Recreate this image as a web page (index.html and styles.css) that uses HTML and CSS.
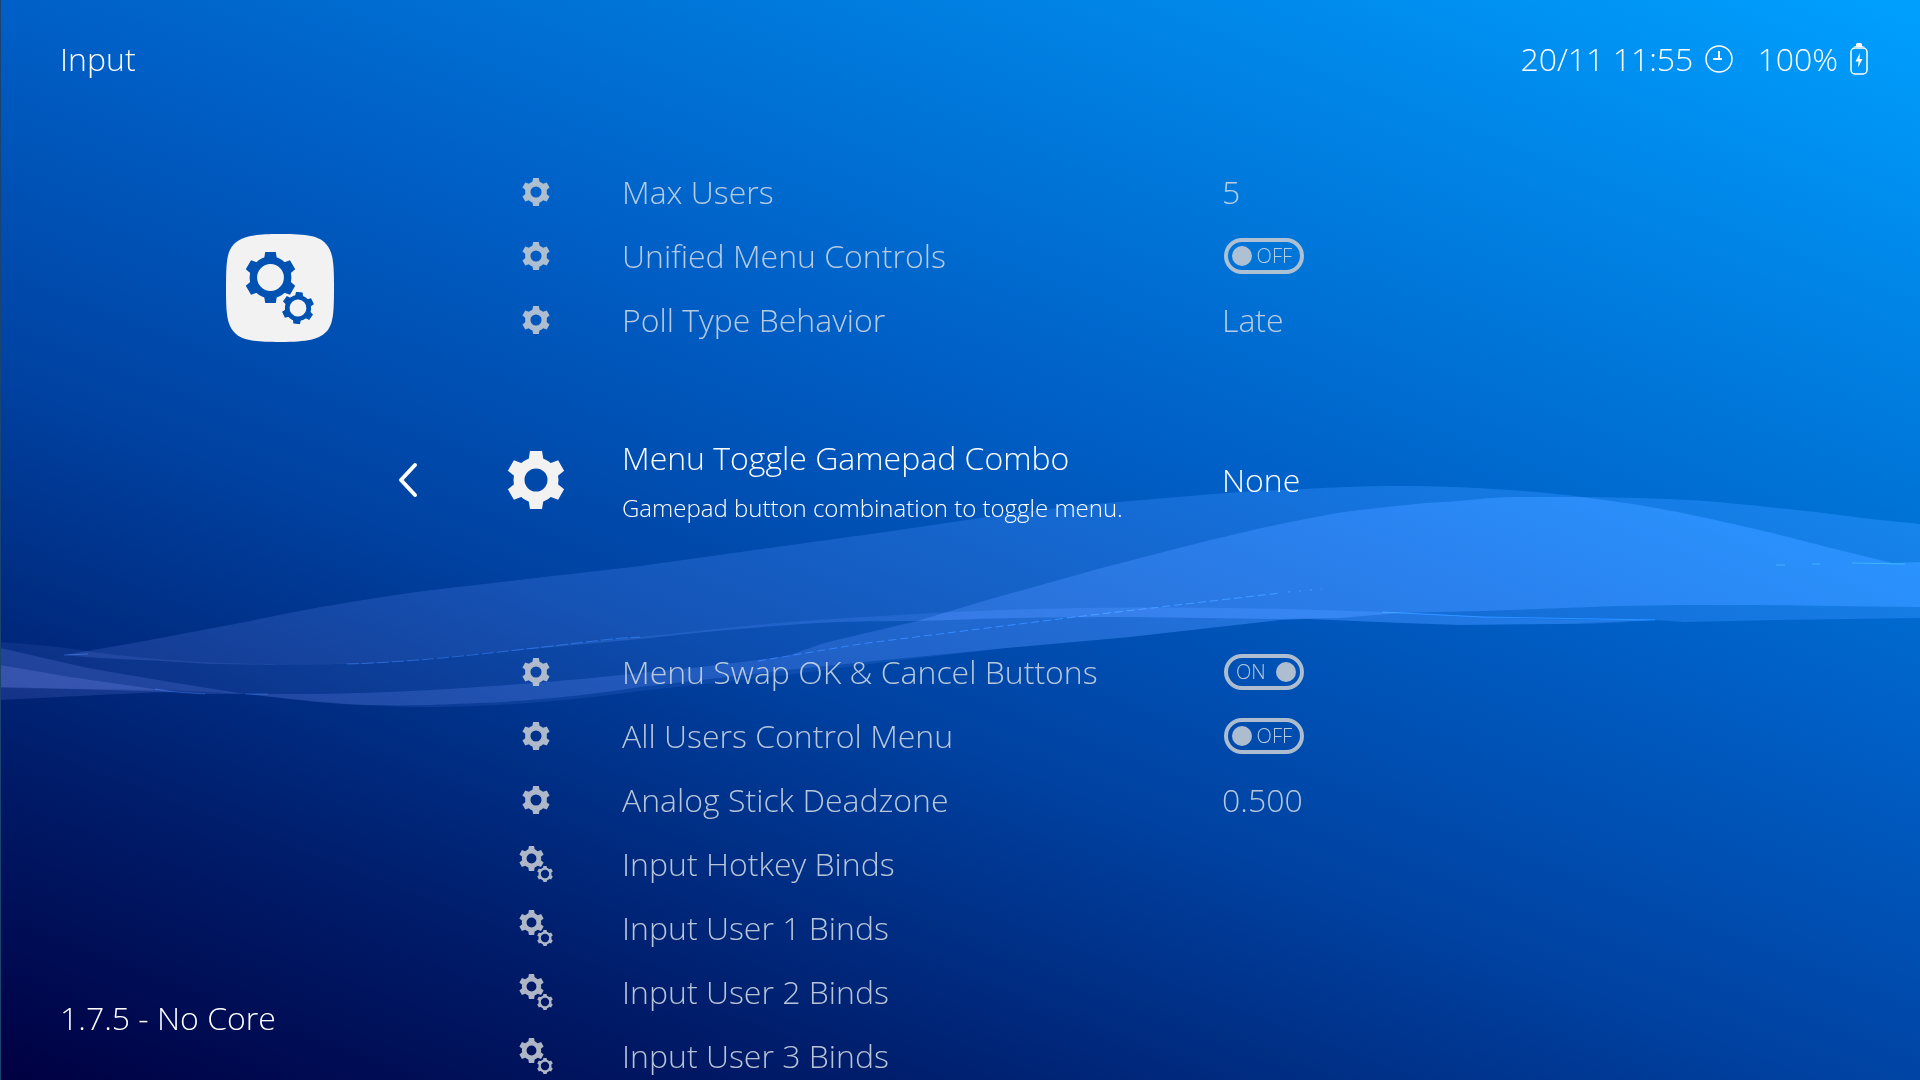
FILE: index.html
```html
<!DOCTYPE html>
<html lang="en">
<head>
<meta charset="utf-8">
<title>Input</title>
<link rel="stylesheet" href="styles.css">
</head>
<body>
<svg class="defs" aria-hidden="true">
  <symbol id="gear" viewBox="-29 -29 58 58">
    <circle r="17" fill="none" stroke="currentColor" stroke-width="11"/>
    <g fill="currentColor">
      <path id="tooth" d="M-6 -29H6L7.500 -20H-7.500Z"/>
      <use href="#tooth" transform="rotate(60)"/>
      <use href="#tooth" transform="rotate(120)"/>
      <use href="#tooth" transform="rotate(180)"/>
      <use href="#tooth" transform="rotate(240)"/>
      <use href="#tooth" transform="rotate(300)"/>
    </g>
  </symbol>
  <symbol id="gear-thin" viewBox="-29 -29 58 58">
    <circle r="19.500" fill="none" stroke="currentColor" stroke-width="8.500"/>
    <g fill="currentColor">
      <use href="#tooth"/>
      <use href="#tooth" transform="rotate(60)"/>
      <use href="#tooth" transform="rotate(120)"/>
      <use href="#tooth" transform="rotate(180)"/>
      <use href="#tooth" transform="rotate(240)"/>
      <use href="#tooth" transform="rotate(300)"/>
    </g>
  </symbol>
  <symbol id="gears" viewBox="0 0 36 36">
    <use href="#gear" x="1" y="0" width="25" height="25"/>
    <use href="#gear-thin" x="19" y="20" width="16" height="16"/>
  </symbol>
</svg>

<svg class="waves" viewBox="0 0 1920 1080" preserveAspectRatio="none" aria-hidden="true">
  <path class="wave faint" d="M0 642C22 644 44 645 65 648S130 658 200 662C300 667 400 663 449 657C510 651 580 643 640 637S760 624 803 621S940 612 1000 610S1160 606 1280 609S1430 614 1484 617S1600 620 1655 620L1557 624L1460 625L1402 623L1308 619L1280 620L1130 637L1007 648L885 662L787 675L640 691C560 702 500 706 440 707S320 702 245 694L170 690L0 688Z"/>
  <path class="wave" d="M64 655L139 642L245 622C300 610 380 596 449 588S580 573 640 566L762 549L885 532L987 517C1040 510 1080 505 1130 501S1230 492 1280 490S1350 486 1402 486S1530 490 1582 497S1640 505 1672 511S1780 534 1827 547L1892 563L1920 562V607L1827 606C1780 605 1740 605 1682 605L1619 606L1484 611L1400 613L1340 618L1280 619L1130 617C1060 617 1000 618 950 620S860 620 803 624S700 632 640 639L531 649L449 657C410 661 370 664 347 664S240 666 196 663S100 659 64 655Z"/>
  <path class="wave" d="M245 694L286 694C340 694 400 692 449 689S590 679 640 673L701 667L758 660L787 656L824 643L917 621L987 600L1048 583L1109 566C1140 558 1160 553 1191 545S1250 531 1280 524L1321 516C1340 512 1360 510 1378 508S1420 503 1443 502S1490 497 1513 497H1582C1610 497 1640 498 1668 499S1720 502 1749 505S1800 510 1831 514S1890 521 1920 524V618L1778 620L1684 622L1655 620C1600 624 1580 624 1557 624L1460 625L1402 623L1308 619L1280 620L1130 637L1007 648L885 660L787 670L640 687C590 695 530 701 480 703S410 706 367 705S300 700 245 694Z"/>
  <path class="wave" d="M0 648L88 668L170 682L245 694H205L175 692C120 693 50 698 0 700Z"/>
  <path class="wave" d="M0 665L70 677L175 692L70 689L0 687Z"/>
  <g class="glints">
    <path d="M347 664C420 662 500 652 560 645S620 638 640 637" stroke-dasharray="12 3"/>
    <path d="M758 661L860 644L1075 617L1280 593" stroke-dasharray="8 4"/>
    <path d="M1288 592L1322 589" stroke-dasharray="2 9"/>
    <path d="M64 655L88 654M155 689L175 692L205 694M245 694H268M1382 612L1484 617L1655 620M1776 565H1785M1812 564H1820M1852 563L1905 564"/>
  </g>
</svg>

<header class="top">
  <h1>Input</h1>
  <div class="status">
    <time>20/11 11:55</time>
    <svg class="clock" viewBox="0 0 28 28" aria-hidden="true"><circle cx="14" cy="14" r="13" fill="none" stroke="currentColor" stroke-width="1.500"/><path d="M14 6V15M8 14H17" fill="none" stroke="currentColor" stroke-width="2"/></svg>
    <span>100%</span>
    <svg class="battery" viewBox="0 0 18 32" aria-hidden="true"><rect x="1" y="5" width="16" height="26" rx="4" fill="none" stroke="currentColor" stroke-width="1.500"/><path d="M3 4L6 3V1.500Q6 0 7.500 0H10.500Q12 0 12 1.500V3L15 4ZM10 10L5.500 18.500H8.500L8 24.500L12.500 16H9.500Z" fill="currentColor"/></svg>
  </div>
</header>

<main class="menu">
  <aside class="side">
    <svg class="tile" viewBox="0 0 108 108" role="img" aria-label="Settings">
      <path fill="#f2f2f2" d="M54 0C82 0 93 2 100 10S108 28 108 54S107 91 100 98S82 108 54 108S15 106 8 98S0 80 0 54S1 17 8 10S26 0 54 0Z"/>
      <g color="#0052b2">
        <use href="#gear-thin" x="19" y="18" width="51" height="51"/>
        <use href="#gear-thin" x="56" y="58" width="32" height="32" transform="rotate(5 72 74)"/>
      </g>
    </svg>
    <p class="version">1.7.5 - No Core</p>
  </aside>

  <section class="list">
    <div class="row">
      <svg class="icon"><use href="#gear"/></svg>
      <span>Max Users</span>
      <span>5</span>
    </div>
    <div class="row">
      <svg class="icon"><use href="#gear"/></svg>
      <label for="unified">Unified Menu Controls</label>
      <span class="toggle"><input type="checkbox" id="unified"><span class="off">OFF</span></span>
    </div>
    <div class="row">
      <svg class="icon"><use href="#gear"/></svg>
      <span>Poll Type Behavior</span>
      <span>Late</span>
    </div>
    <div class="row selected">
      <button class="back" type="button" aria-label="Back"><svg viewBox="0 0 20 36"><path d="M17 3L3 18L17 33" fill="none" stroke="currentColor" stroke-width="4" stroke-linecap="round" stroke-linejoin="round"/></svg></button>
      <svg class="icon large"><use href="#gear"/></svg>
      <div>
        <h2>Menu Toggle Gamepad Combo</h2>
        <p class="hint">Gamepad button combination to toggle menu.</p>
      </div>
      <span>None</span>
    </div>
    <div class="row">
      <svg class="icon"><use href="#gear"/></svg>
      <label for="swap">Menu Swap OK &amp; Cancel Buttons</label>
      <span class="toggle"><span class="on">ON</span><input type="checkbox" id="swap" checked></span>
    </div>
    <div class="row">
      <svg class="icon"><use href="#gear"/></svg>
      <label for="all-users">All Users Control Menu</label>
      <span class="toggle"><input type="checkbox" id="all-users"><span class="off">OFF</span></span>
    </div>
    <div class="row">
      <svg class="icon"><use href="#gear"/></svg>
      <span>Analog Stick Deadzone</span>
      <span>0.500</span>
    </div>
    <a class="row" href="#hotkeys"><svg class="icon double"><use href="#gears"/></svg><span>Input Hotkey Binds</span></a>
    <a class="row" href="#user1"><svg class="icon double"><use href="#gears"/></svg><span>Input User 1 Binds</span></a>
    <a class="row" href="#user2"><svg class="icon double"><use href="#gears"/></svg><span>Input User 2 Binds</span></a>
    <a class="row" href="#user3"><svg class="icon double"><use href="#gears"/></svg><span>Input User 3 Binds</span></a>
  </section>
</main>
</body>
</html>
```
FILE: styles.css
```css
* { box-sizing: border-box; }

body {
  margin: 0;
  height: 100vh;
  overflow: hidden;
  display: flex;
  flex-direction: column;
  font: 300 32px/44px "Open Sans", "Noto Sans", sans-serif;
  color: #fff;
  background: linear-gradient(21deg, #000042 0%, #001c6a 18%, #0042a2 39%, #005fc6 59%, #0077da 74%, #00a0ff 100%);
  box-shadow: inset 1px 0 #1c4470;
}

h1, h2, p { margin: 0; font: inherit; }

.defs { position: absolute; width: 0; height: 0; }

/* The ribbons add light to whatever lies below them */
.waves {
  position: absolute;
  inset: 0;
  width: 100%;
  height: 100%;
  z-index: -1;
  mix-blend-mode: plus-lighter;
}

.wave { fill: #151215; mix-blend-mode: plus-lighter; }
.wave.faint { fill: #0c0b0d; }
.glints { fill: none; stroke: #6ab0ff; stroke-opacity: .2; mix-blend-mode: plus-lighter; }

.top {
  display: flex;
  align-items: center;
  justify-content: space-between;
  height: 118px;
  flex: none;
  padding: 0 52px 0 60px;
}

.status { display: flex; align-items: center; }
.clock { width: 28px; height: 28px; margin: 0 24px 0 12px; }
.battery { width: 18px; height: 32px; margin-left: 12px; }

.menu {
  flex: 1;
  min-height: 0;
  display: grid;
  grid-template-columns: 366px 1fr;
}

.side {
  display: flex;
  flex-direction: column;
  justify-content: space-between;
  padding: 116px 32px 40px 60px;
}

.tile { width: 108px; height: 108px; align-self: flex-end; }
.version { padding-bottom: 8px; }

.list { padding-top: 42px; }

.row {
  display: grid;
  grid-template-columns: 84px 172px 600px 1fr;
  align-items: center;
  height: 64px;
  color: #d2dae4;
  opacity: .88;
  text-decoration: none;
}

.icon {
  grid-column: 2;
  justify-self: center;
  width: 28px;
  height: 28px;
  color: #c6ccd4;
}

.icon.double { width: 36px; height: 36px; }
.icon.large { width: 58px; height: 58px; color: #f2f2f2; }

.row.selected {
  height: 256px;
  margin-bottom: 32px;
  color: #fff;
  opacity: 1;
}

.selected h2 { line-height: 56px; }
.hint { font-size: 24px; line-height: 44px; }

.back {
  justify-self: center;
  padding: 0;
  border: 0;
  background: none;
  color: inherit;
  line-height: 0;
}

.back svg { width: 20px; height: 36px; }

.toggle {
  display: flex;
  align-items: center;
  justify-content: space-between;
  width: 80px;
  height: 36px;
  margin-left: 2px;
  padding: 0 4px;
  border: 4px solid #c6ccd4;
  border-radius: 18px;
  font-size: 20px;
  line-height: 28px;
}

.toggle input {
  appearance: none;
  width: 20px;
  height: 20px;
  margin: 0;
  border-radius: 50%;
  background: #c6ccd4;
}

.off { margin-right: 4px; }
.on { margin-left: 4px; }
```
